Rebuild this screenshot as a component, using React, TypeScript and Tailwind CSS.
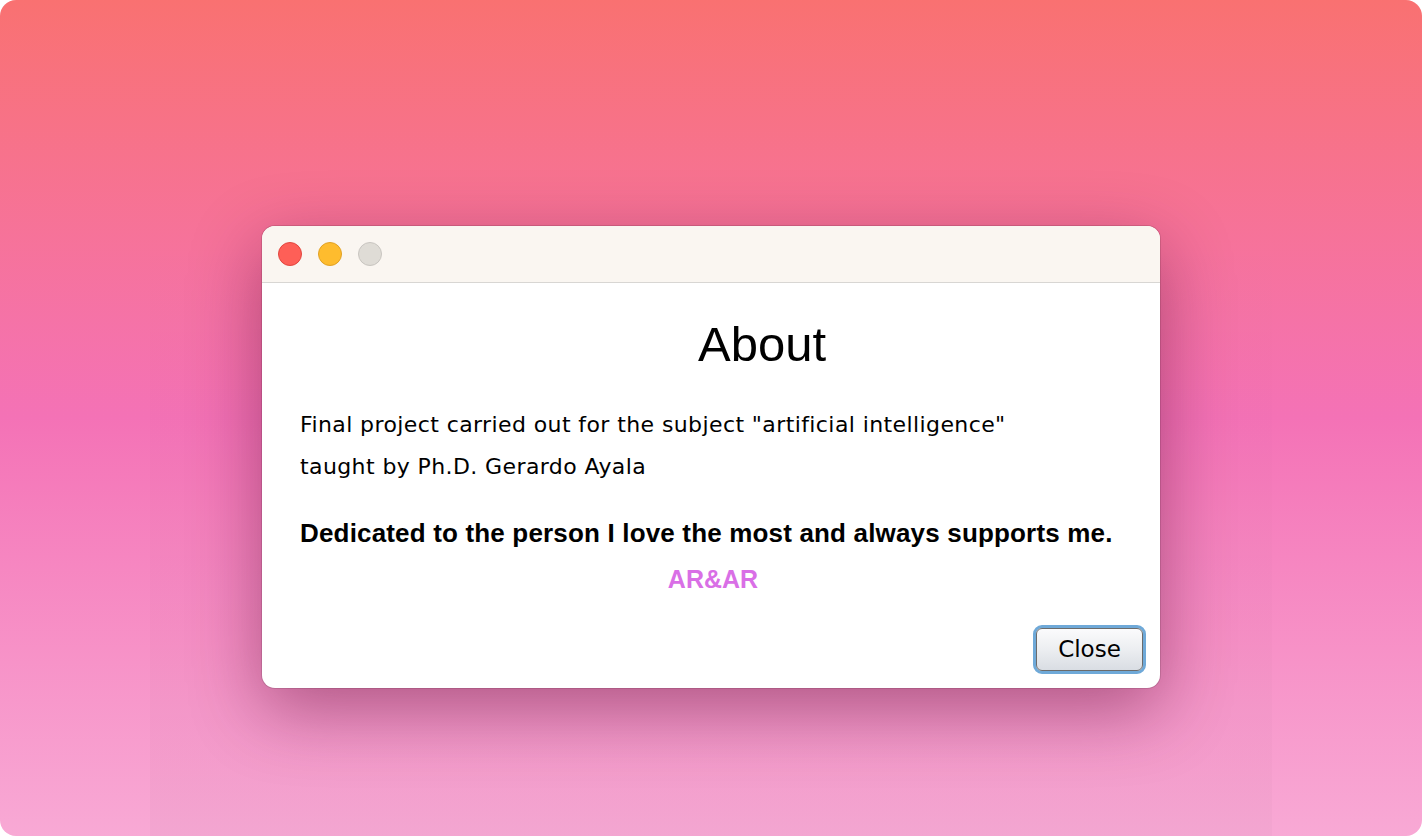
export default function App() {
    return (
        <div className="h-[836px] w-[1422px] bg-white">
            <div className="flex h-full w-full justify-center overflow-hidden rounded-2xl bg-gradient-to-b from-[#f97171] via-[#f472b6] to-[#f8a9d5] pt-[190px]">
                <div className="flex h-full w-[1122px] justify-center bg-gradient-to-b from-black/0 to-black/[0.02] pt-[36px]">
                    <AboutWindow />
                </div>
            </div>
        </div>
    );
}

function AboutWindow() {
    return (
        <div className="flex h-[462px] w-[898px] flex-col overflow-hidden rounded-[13px] bg-white shadow-[0_22px_70px_rgba(90,10,50,0.45),0_0_0_1px_rgba(0,0,0,0.12)]">
            <div className="flex h-[57px] shrink-0 items-center gap-4 border-b border-[#d8d6d3] bg-[#faf6f1] pl-[16px]">
                <span className="h-6 w-6 rounded-full border border-[#e2463f] bg-[#fe5f57]" />
                <span className="h-6 w-6 rounded-full border border-[#e1a124] bg-[#febc2e]" />
                <span className="h-6 w-6 rounded-full border border-[#c8c5c0] bg-[#dfdcd6]" />
            </div>

            <div className="flex flex-1 flex-col">
                <h1 className="mt-[32px] pl-[102px] text-center font-['Liberation_Sans',Arial,sans-serif] text-[49px] leading-[58px] font-normal text-black">
                    About
                </h1>

                <div className="mt-[31px] pl-[38px] font-['DejaVu_Sans',Verdana,sans-serif] text-[22px] leading-[42px] tracking-[0.4px] text-black">
                    <p>Final project carried out for the subject "artificial intelligence"</p>
                    <p>taught by Ph.D. Gerardo Ayala</p>
                </div>

                <p className="mt-[30px] pl-[38px] font-['Liberation_Sans',Arial,sans-serif] text-[26px] leading-[30px] font-bold tracking-[0.17px] text-black">
                    Dedicated to the person I love the most and always supports me.
                </p>

                <p className="mt-[16px] pl-[4px] text-center font-['Liberation_Sans',Arial,sans-serif] text-[25px] leading-[30px] font-bold text-[#d96fe6]">
                    AR&amp;AR
                </p>

                <div className="mt-auto flex justify-end pr-[14px] pb-[14px]">
                    <button className="h-[49px] w-[113px] rounded-[9px] border-[3px] border-[#6fa9d8] p-0">
                        <span className="flex h-full w-full items-center justify-center rounded-[6px] border border-[#6b6b6b] bg-gradient-to-b from-[#fbfbfc] via-[#eceef1] to-[#d9dde3] font-['DejaVu_Sans',Verdana,sans-serif] text-[23px] text-black">
                            Close
                        </span>
                    </button>
                </div>
            </div>
        </div>
    );
}
